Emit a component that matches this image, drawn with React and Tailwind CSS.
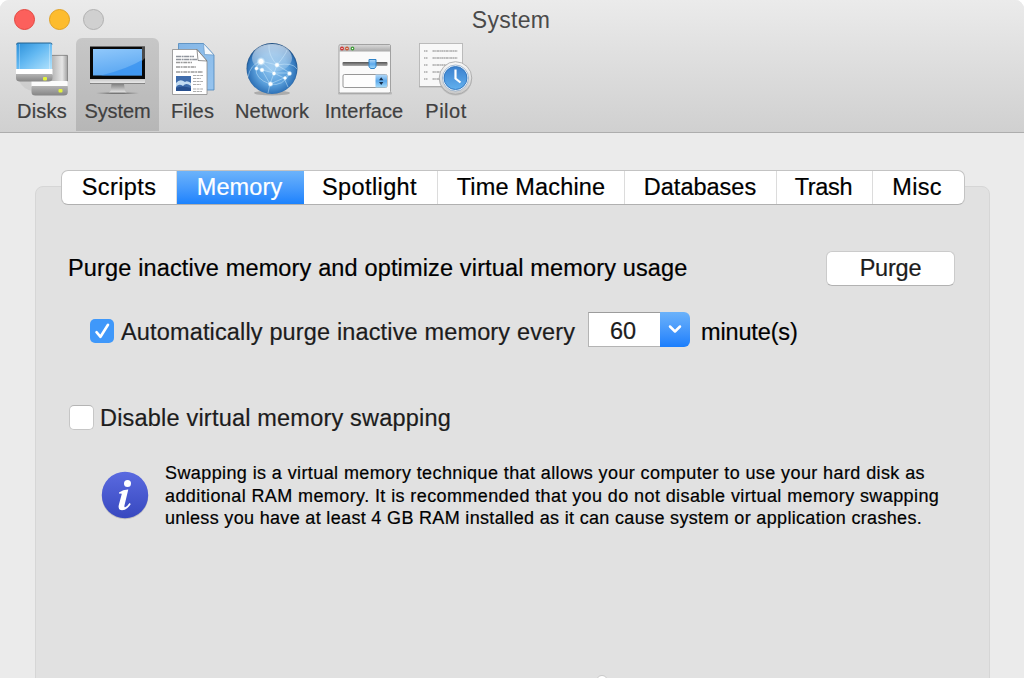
import React from "react";

function DisksIcon() {
  return (
    <svg width="68" height="60" viewBox="8 38 68 60" className="block">
      <defs>
        <linearGradient id="dBlue" x1="0" y1="0" x2="1" y2="1">
          <stop offset="0" stopColor="#2b8fd8" />
          <stop offset="0.45" stopColor="#62b8f2" />
          <stop offset="1" stopColor="#b4e4fd" />
        </linearGradient>
        <linearGradient id="dGray" x1="0" y1="0" x2="1" y2="0">
          <stop offset="0" stopColor="#8f8f8f" />
          <stop offset="0.6" stopColor="#bcbcbc" />
          <stop offset="0.85" stopColor="#e6e6e6" />
          <stop offset="1" stopColor="#a0a0a0" />
        </linearGradient>
        <linearGradient id="dEdge" x1="0" y1="0" x2="0" y2="1">
          <stop offset="0" stopColor="#b4b4b4" />
          <stop offset="1" stopColor="#858585" />
        </linearGradient>
      </defs>
      <path d="M19 81h13v10q-9 -2 -13 -10z" fill="#000" opacity="0.05" />
      <rect x="32" y="55" width="35.5" height="27" rx="1" fill="url(#dGray)" />
      <path d="M51 55.400h16.500v26" fill="none" stroke="#7d7d7d" strokeWidth="0.800" />
      <rect x="31.5" y="81" width="36" height="6" fill="#fbfbfb" />
      <path d="M31.5 86h36.3v6q0 3.5 -4 3.5h-28.500q-3.800 0 -3.800 -3.500z" fill="url(#dEdge)" />
      <rect x="58.500" y="89" width="4" height="3.500" rx="1" fill="#e4f43c" />
      <rect x="16.500" y="43" width="35.500" height="27" rx="1.500" fill="url(#dBlue)" />
      <path d="M16.500 44.500q0 -1.500 1.500 -1.500h32.500q1.500 0 1.500 1.500" fill="none" stroke="#24628e" strokeWidth="1" />
      <path d="M19.500 44v25M49.500 44v25" stroke="#fff" strokeOpacity="0.300" />
      <rect x="16" y="69" width="36.500" height="6" fill="#fff" />
      <path d="M16 74h36.500v4q0 3.500 -4 3.500h-28.500q-4 0 -4 -3.500z" fill="url(#dEdge)" />
      <rect x="43" y="77" width="4" height="3.500" rx="1" fill="#e4f43c" />
    </svg>
  );
}

function MonitorIcon() {
  return (
    <svg width="68" height="60" viewBox="84 38 68 60" className="block">
      <defs>
        <linearGradient id="mScreen" x1="0" y1="0" x2="0.300" y2="1">
          <stop offset="0" stopColor="#90c8fb" />
          <stop offset="1" stopColor="#5ca8f2" />
        </linearGradient>
        <linearGradient id="mChin" x1="0" y1="0" x2="0" y2="1">
          <stop offset="0" stopColor="#c8c8c8" />
          <stop offset="1" stopColor="#f0f0f0" />
        </linearGradient>
        <linearGradient id="mStand" x1="0" y1="0" x2="0" y2="1">
          <stop offset="0" stopColor="#838383" />
          <stop offset="1" stopColor="#eee" />
        </linearGradient>
        <linearGradient id="mBase" x1="0" y1="0" x2="1" y2="0">
          <stop offset="0" stopColor="#777" stopOpacity="0" />
          <stop offset="0.350" stopColor="#777" />
          <stop offset="0.650" stopColor="#777" />
          <stop offset="1" stopColor="#777" stopOpacity="0" />
        </linearGradient>
      </defs>
      <rect x="90" y="46" width="55" height="33" fill="#080808" />
      <path d="M90 46.500h55" stroke="#6b6b6b" />
      <path d="M145 47v11l-3 3v-14z" fill="#4a4a4a" />
      <rect x="93" y="49" width="49" height="26.500" fill="url(#mScreen)" />
      <path d="M142 60q-15 9 -41 15.500h41z" fill="#2f8df0" opacity="0.650" />
      <path d="M90 79h55v3q0 2 -2 2h-51q-2 0 -2 -2z" fill="url(#mChin)" />
      <path d="M90 83.500h55" stroke="#6b6b6b" strokeWidth="0.800" />
      <path d="M111.500 84h12.500l1 7 2.500 2.500h-19.500l2.500 -2.500z" fill="url(#mStand)" />
      <rect x="96" y="92.500" width="43" height="1.500" fill="url(#mBase)" />
    </svg>
  );
}

function FilesIcon() {
  return (
    <svg width="60" height="60" viewBox="163 38 60 60" className="block">
      <defs>
        <linearGradient id="fBack" x1="0" y1="0" x2="1" y2="1">
          <stop offset="0" stopColor="#84b6e6" />
          <stop offset="1" stopColor="#96c4ef" />
        </linearGradient>
      </defs>
      <path d="M178.500 43.500h25l10.500 11.500v35h-35.500z" fill="url(#fBack)" stroke="#4d86bb" strokeWidth="0.800" />
      <path d="M203.500 43.500l1 11 9.500 .5z" fill="#f4f8fc" stroke="#6898c4" strokeWidth="0.700" />
      <path d="M172.500 49.500h24.500l10 11.500v33.500h-34.500z" fill="#fff" stroke="#8b8b8b" strokeWidth="0.800" />
      <path d="M197 49.500l1 11 9 .5z" fill="#fbfcfd" stroke="#666" strokeWidth="0.700" />
      <g fill="none" stroke="#8f949c" strokeWidth="1.300">
        <path d="M176 56.500h18M176 59.500h21" strokeDasharray="5 .6 2 .5" />
        <path d="M176 62.500h16M176 67h20M176 72h27" stroke="#9a9a9a" strokeDasharray="4 .6 2 .7" />
        <path d="M193 75.500h10M193 78.500h8M193 81.500h10M193 84.500h8M193 89h10M193 91.500h9" stroke="#adadad" strokeWidth="1" strokeDasharray="3 .6" />
      </g>
      <rect x="176" y="76" width="15" height="15" fill="#3f6cab" />
      <path d="M176 83q4 -5 9 -1 2 -2 6 1v3q-5 -4 -8 0 -4 -3 -7 1z" fill="#c3dcf2" />
      <path d="M176 88q6 -3 15 0v3h-15z" fill="#274f8e" />
    </svg>
  );
}

function NetworkIcon() {
  return (
    <svg width="60" height="60" viewBox="242 38 60 60" className="block">
      <defs>
        <radialGradient id="nGlobe" cx="0.500" cy="0.520" r="0.520">
          <stop offset="0" stopColor="#8cc3ef" />
          <stop offset="0.600" stopColor="#5a9fdb" />
          <stop offset="0.900" stopColor="#3175ba" />
          <stop offset="1" stopColor="#1c4878" />
        </radialGradient>
        <linearGradient id="nGloss" x1="0" y1="0" x2="0" y2="1">
          <stop offset="0" stopColor="#fff" stopOpacity="0.650" />
          <stop offset="1" stopColor="#fff" stopOpacity="0.120" />
        </linearGradient>
        <radialGradient id="nDot">
          <stop offset="0.450" stopColor="#fff" />
          <stop offset="1" stopColor="#cdf0ff" stopOpacity="0" />
        </radialGradient>
      </defs>
      <ellipse cx="272" cy="93" rx="18" ry="2.500" fill="#000" opacity="0.200" />
      <circle cx="272" cy="68.500" r="25.500" fill="url(#nGlobe)" />
      <ellipse cx="272" cy="58" rx="20" ry="14" fill="url(#nGloss)" />
      <g fill="none" stroke="#d4efff" strokeOpacity="0.500" strokeWidth="0.900">
        <path d="M261 61L277 65 290 73 284 78 270 84 262 70 256 68 261 61 274 73 290 73M277 65L274 73 270 84M277 65Q286 54 287 50M277 65Q268 55 269 45M262 70L274 73 284 78M256 68Q255 79 270 84Q283 87 290 73M261 61Q250 65 248 77M277 65Q293 62 297 69M270 84L268 93M284 78L288 87" />
      </g>
      <circle cx="261" cy="61.500" r="4.500" fill="url(#nDot)" />
      <circle cx="277" cy="65" r="3" fill="url(#nDot)" />
      <circle cx="256.500" cy="68.500" r="2.500" fill="url(#nDot)" />
      <circle cx="262" cy="70" r="2.800" fill="url(#nDot)" />
      <circle cx="274" cy="73.500" r="2.500" fill="url(#nDot)" />
      <circle cx="289.500" cy="73.500" r="2.800" fill="url(#nDot)" />
      <circle cx="285" cy="78" r="2.300" fill="url(#nDot)" />
      <circle cx="270.500" cy="84" r="3" fill="url(#nDot)" />
    </svg>
  );
}

function InterfaceIcon() {
  return (
    <svg width="60" height="60" viewBox="334.500 38 60 60" className="block">
      <defs>
        <linearGradient id="iBar" x1="0" y1="0" x2="0" y2="1">
          <stop offset="0" stopColor="#d7d7d7" />
          <stop offset="1" stopColor="#a8a8a8" />
        </linearGradient>
        <linearGradient id="iBlue" x1="0" y1="0" x2="0" y2="1">
          <stop offset="0" stopColor="#b5d9f8" />
          <stop offset="0.500" stopColor="#5ba9ec" />
          <stop offset="1" stopColor="#a7dcfa" />
        </linearGradient>
        <linearGradient id="iTrack" x1="0" y1="0" x2="0" y2="1">
          <stop offset="0" stopColor="#555" />
          <stop offset="1" stopColor="#aaa" />
        </linearGradient>
      </defs>
      <rect x="338.500" y="92" width="54" height="2.500" rx="1" fill="#000" opacity="0.150" />
      <rect x="339.500" y="44.500" width="51.500" height="48.500" rx="1.500" fill="#fafafa" stroke="#989898" strokeWidth="0.900" />
      <path d="M340 51.500v-5q0 -1.500 1.500 -1.500h47.500q1.500 0 1.500 1.500v5z" fill="url(#iBar)" />
      <g fill="#fff" strokeWidth="1.200">
        <circle cx="342.500" cy="48.500" r="1.300" stroke="#cc2a2a" />
        <circle cx="347.500" cy="48.500" r="1.300" stroke="#c8502a" />
        <circle cx="353" cy="48.500" r="1.300" stroke="#3e9c35" />
      </g>
      <rect x="343" y="62" width="45" height="4" rx="1" fill="url(#iTrack)" />
      <path d="M369.500 59.500h7v7l-1.500 2h-4l-1.500 -2z" fill="url(#iBlue)" stroke="#2f83c8" strokeWidth="1" strokeLinejoin="round" />
      <rect x="343.500" y="74.500" width="44" height="13" rx="1.500" fill="#fdfdfd" stroke="#8b8b8b" strokeWidth="0.900" />
      <path d="M376 74.500h10q1.500 0 1.500 1.500v10q0 1.500 -1.500 1.500h-10z" fill="url(#iBlue)" />
      <path d="M379.500 80.200l2.200 -3 2.200 3zM379.500 82l2.200 3 2.200 -3z" fill="#17304e" />
    </svg>
  );
}

function PilotIcon() {
  return (
    <svg width="60" height="60" viewBox="416 38 60 60" className="block">
      <defs>
        <linearGradient id="pRing" x1="0" y1="0" x2="0" y2="1">
          <stop offset="0" stopColor="#f9f9f9" />
          <stop offset="1" stopColor="#c8c8c8" />
        </linearGradient>
        <linearGradient id="pFace" x1="0" y1="0" x2="0" y2="1">
          <stop offset="0" stopColor="#3b80ce" />
          <stop offset="1" stopColor="#62b0ee" />
        </linearGradient>
      </defs>
      <rect x="419.500" y="43.500" width="43" height="43" fill="#f8f8f8" stroke="#b5b5b5" strokeWidth="0.900" />
      <path d="M419 87h44" stroke="#000" strokeOpacity="0.150" />
      <g stroke="#bdbdbd" strokeWidth="2.200" fill="none">
        <path d="M424 51h4M424 58h4M424 65h4M424 72h4M424 79h4" strokeDasharray="1.500 .5" />
        <path d="M432.500 51h25M432.500 58h25M432.500 65h17M432.500 72h9M432.500 79h9" strokeDasharray="2.300 .4 1.300 .4" />
      </g>
      <circle cx="455.500" cy="79" r="16.500" fill="#000" opacity="0.120" />
      <circle cx="455.500" cy="78" r="16.300" fill="url(#pRing)" stroke="#a5a5a5" strokeWidth="0.800" />
      <circle cx="455.500" cy="78" r="13" fill="#fff" stroke="#7f9fc2" strokeWidth="0.700" />
      <circle cx="455.500" cy="78" r="11.500" fill="url(#pFace)" stroke="#2e74bd" strokeWidth="0.900" />
      <path d="M455.500 69.500v9l5 4" fill="none" stroke="#fff" strokeWidth="2.200" />
    </svg>
  );
}

const tools = [
  { name: "Disks", Icon: DisksIcon, box: "w-[68px]", text: "tracking-[0.2px]" },
  { name: "System", Icon: MonitorIcon, box: "w-[83px] h-[93px] rounded-t-[6px] bg-black/[0.12]", text: "tracking-[-0.1px]" },
  { name: "Files", Icon: FilesIcon, box: "w-[67px]", text: "tracking-[0.2px]" },
  { name: "Network", Icon: NetworkIcon, box: "w-[92px]", text: "tracking-[0.1px]" },
  { name: "Interface", Icon: InterfaceIcon, box: "w-[92px]", text: "tracking-[0.1px]" },
  { name: "Pilot", Icon: PilotIcon, box: "w-[72px]", text: "tracking-[0.5px]" },
];

const tabs = [
  { name: "Scripts", box: "w-[115px]", text: "tracking-[0.4px]" },
  { name: "Memory", box: "w-[127px] pr-[2px]", text: "tracking-[0.1px]", active: true },
  { name: "Spotlight", box: "w-[134px] pr-[2px]", text: "tracking-[0.4px]" },
  { name: "Time Machine", box: "w-[187px]", text: "tracking-[0.15px]" },
  { name: "Databases", box: "w-[152px] pr-px", text: "tracking-[0px]" },
  { name: "Trash", box: "w-[96px] pr-[2px]", text: "tracking-[-0.3px]" },
  { name: "Misc", box: "w-[91px] pr-[3px]", text: "tracking-[0.3px]" },
];

function Toolbar() {
  return (
    <header className="relative h-[133px] border-b border-[#adadad] bg-linear-to-b from-[#ebebeb] to-[#d0d0d0]">
      <div className="flex h-[38px] items-center">
        <div className="absolute left-[14px] top-[9px] flex gap-[13.500px]">
          <span className="size-[21px] rounded-full border border-[#e2463f] bg-[#fc605c]" />
          <span className="size-[21px] rounded-full border border-[#dfa023] bg-[#fdbc2e]" />
          <span className="size-[21px] rounded-full border border-[#b0b0b0] bg-[#d0d0d0]" />
        </div>
        <h1 className="w-full pr-[2px] pt-px text-center text-[23px] leading-[36px] tracking-[0.3px] text-[#4a4a4a]">System</h1>
      </div>
      <nav className="flex h-[94px] pl-2">
        {tools.map(({ name, Icon, box, text }) => (
          <button key={name} className={`flex flex-col items-center ${box}`}>
            <Icon />
            <span className={`text-[20px] leading-[26px] text-[#404040] [-webkit-text-stroke:0.2px] ${text}`}>{name}</span>
          </button>
        ))}
      </nav>
    </header>
  );
}

function Tabs() {
  return (
    <div className="-mt-[17px] ml-[25px] flex h-[35px] w-[904px] overflow-hidden rounded-[7px] border border-[#c3c3c3] border-b-[#b0b0b0] bg-white">
      {tabs.map(({ name, box, text, active }) => (
        <button
          key={name}
          className={`shrink-0 text-[23.5px] leading-[33px] ${box} ${text} ${
            active
              ? "bg-linear-to-b from-[#6cb3fa] to-[#1a82fd] text-white"
              : "border-r border-[#dcdcdc] text-black last:border-r-0"
          }`}
        >
          {name}
        </button>
      ))}
    </div>
  );
}

export default function App() {
  return (
    <div className="h-[678px] w-[1024px] overflow-hidden bg-white font-['Liberation_Sans',Arial,sans-serif]">
      <div className="h-full overflow-hidden rounded-t-[9px] bg-[#ebebeb]">
        <Toolbar />
        <main className="mx-[35px] mt-[53px] h-[520px] w-[955px] rounded-t-[8px] border border-[#d6d6d6] bg-[#e1e1e1] whitespace-nowrap [-webkit-text-stroke:0.2px]">
          <Tabs />
          <section className="flex items-start justify-between pl-[32px] pr-[34px] pt-[46px]">
            <p className="-mt-px text-[23.5px] leading-[36px] tracking-[0.15px] text-black">
              Purge inactive memory and optimize virtual memory usage
            </p>
            <button className="h-[35px] w-[129px] rounded-[6px] border border-[#cbcbcb] border-b-[#b2b2b2] bg-white text-[23.5px] leading-[33px] tracking-[-0.2px] text-[#1c1c1c]">
              Purge
            </button>
          </section>
          <section className="mt-[26px] flex h-[36px] items-center pl-[54px]">
            <span className="mt-px flex size-[24px] items-center justify-center rounded-[5px] bg-[#3f98fa]">
              <svg width="24" height="24" viewBox="0 0 24 24">
                <path d="M6.500 13.200l4 4.600 7.500 -12" fill="none" stroke="#fff" strokeWidth="2.600" strokeLinecap="round" strokeLinejoin="round" />
              </svg>
            </span>
            <span className="ml-[7px] w-[467px] pt-[3px] text-[23.5px] leading-[30px] tracking-[0.15px] text-[#1c1c1c]">
              Automatically purge inactive memory every
            </span>
            <div className="-mt-[2px] flex h-[35px] w-[102px]">
              <span className="w-[72px] border border-r-0 border-[#b4b4b4] border-t-[#9c9c9c] bg-white pr-[3px] pt-[2px] text-center text-[23.5px] leading-[33px] text-[#1c1c1c]">
                60
              </span>
              <span className="flex w-[30px] items-center justify-center rounded-r-[6px] bg-linear-to-b from-[#6bb2fa] to-[#1a7efc]">
                <svg width="14" height="10" viewBox="0 0 14 10">
                  <path d="M2 2.500l5 5 5 -5" fill="none" stroke="#fff" strokeWidth="2.500" strokeLinecap="round" strokeLinejoin="round" />
                </svg>
              </span>
            </div>
            <span className="ml-[11px] pt-[3px] text-[23.5px] leading-[30px] tracking-[-0.15px] text-black">minute(s)</span>
          </section>
          <section className="mt-[52px] flex h-[34px] items-center pl-[33px]">
            <span className="size-[25px] rounded-[5px] border border-[#c6c6c6] border-t-[#b4b4b4] bg-white" />
            <span className="ml-[6px] pt-[2px] text-[23.5px] leading-[30px] tracking-[0.2px] text-[#1c1c1c]">
              Disable virtual memory swapping
            </span>
          </section>
          <section className="mt-[27px] flex pl-[65px]">
            <svg width="48" height="50" viewBox="0 0 48 50" className="mt-[10px] block shrink-0">
              <defs>
                <linearGradient id="info" x1="0" y1="0" x2="0" y2="1">
                  <stop offset="0" stopColor="#5a6ae0" />
                  <stop offset="1" stopColor="#3748bf" />
                </linearGradient>
              </defs>
              <circle cx="24" cy="25" r="23.300" fill="#000" opacity="0.150" />
              <circle cx="24" cy="24" r="23.200" fill="url(#info)" />
              <circle cx="26.500" cy="12.500" r="3.500" fill="#fff" />
              <path d="M18 21.500Q22.500 18.300 27.300 18.500L23.500 34.300Q23 36.800 24.500 36Q26.500 35 28.500 32L29.800 33Q26 39.200 21 39.200Q16.700 39.200 17.800 34L20.700 23.200Q21 21.800 18.300 22.800Z" fill="#fff" />
            </svg>
            <div className="ml-[16px] pt-[1px] text-[18px] leading-[22.5px] text-black">
              <p className="tracking-[0.4px]">Swapping is a virtual memory technique that allows your computer to use your hard disk as</p>
              <p className="tracking-[0.4px]">additional RAM memory. It is recommended that you do not disable virtual memory swapping</p>
              <p className="tracking-[0.33px]">unless you have at least 4 GB RAM installed as it can cause system or application crashes.</p>
            </div>
          </section>
          <div className="mt-[145px] ml-[560px] size-[12px] rounded-full border border-[#c8c8c8] bg-white" />
        </main>
      </div>
    </div>
  );
}
